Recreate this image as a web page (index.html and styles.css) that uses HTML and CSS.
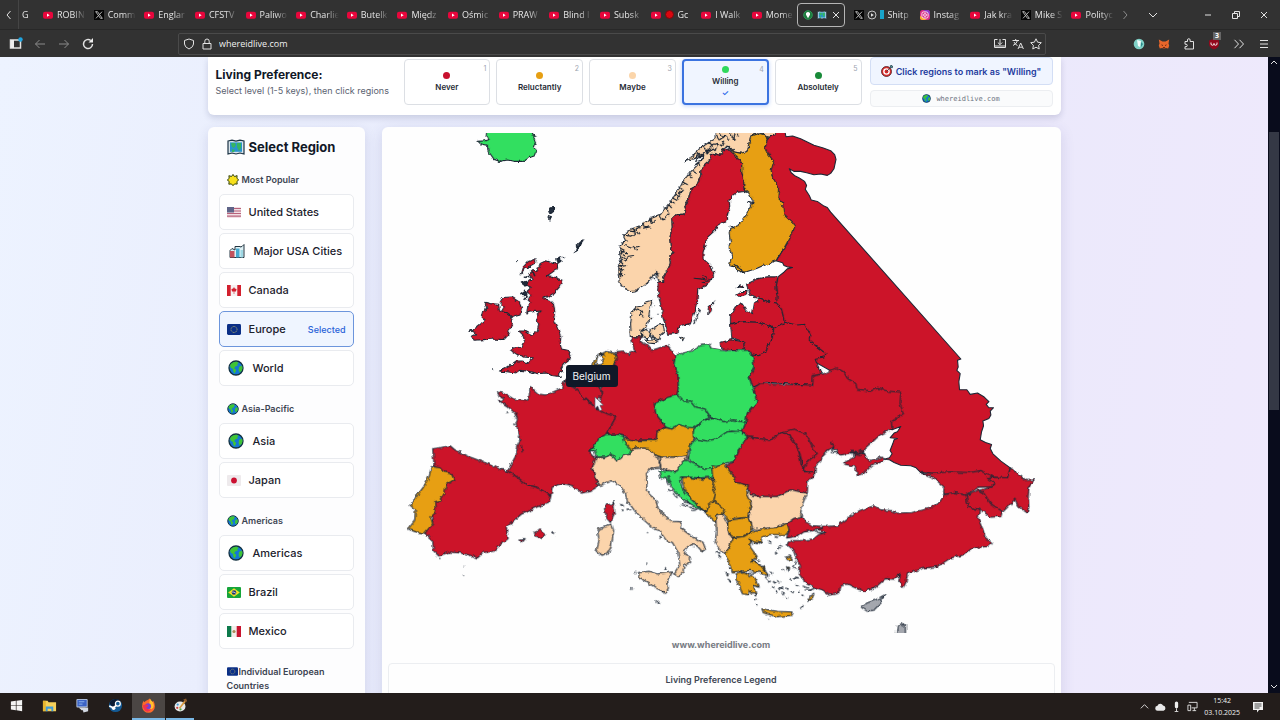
FILE: index.html
```html
<!DOCTYPE html>
<html lang="en">
<head>
<meta charset="utf-8">
<title>Where I'd Live</title>
<link rel="stylesheet" href="styles.css">
</head>
<body>
<svg class="defs" aria-hidden="true">
  <defs>
    <symbol id="yt" viewBox="0 0 12 12"><rect y="2" width="12" height="8.4" rx="2.4" fill="#e8063c"/><path d="M4.8 4.2 8 6.2 4.8 8.2z" fill="#fff"/></symbol>
    <symbol id="xlogo" viewBox="0 0 12 12"><rect width="12" height="12" fill="#050505"/><path d="M2 2h2.2l5.8 8H7.8zM9.6 2 6.7 5.3M5.3 6.8 2.4 10" fill="none" stroke="#e8e8e8" stroke-width=".9"/></symbol>
    <symbol id="globe" viewBox="0 0 16 16"><circle cx="8" cy="8" r="7" fill="#1478d4" stroke="#12303f" stroke-width="1.3"/><path d="M2 5.2C3.4 2.6 6 1.4 9 1.7L10.6 3 9.2 4.2 9.8 5.6 7.2 6.4 6.2 8.4 7.8 9.2 8 11 6.4 13.6 5.2 11 5 9 2.8 7.8zM11 7 13.6 5.4 14.6 8 13.6 11 11.6 12.4 10.6 10z" fill="#3fc435"/></symbol>
    <symbol id="eu" viewBox="0 0 14 11"><rect width="14" height="11" rx="1.4" fill="#0b2f86"/><circle cx="7" cy="5.5" r="3" fill="none" stroke="#b9b46a" stroke-width=".9" stroke-dasharray=".9 .67"/></symbol>
    <symbol id="worldmap" viewBox="0 0 18 16"><path d="M1 2 5 1.2 9 2.2 13 1.2 17 2V15l-4-1-4 1-4-1-4 1z" fill="#d8e4ea" stroke="#1c3344" stroke-width="1.2"/><path d="M3 3.4h12v9.4H3z" fill="#2993cf"/><path d="M4 4h4l1 2-2 3-2-1zM10 4h4v5l-2 3-2-4zM5 10l3 1-1 2H5z" fill="#35b562"/></symbol>
  </defs>
</svg>

<header class="browser">
  <nav class="tabs" aria-label="Open tabs">
    <button class="chev" aria-label="Scroll left"><svg viewBox="0 0 10 10"><path d="M6.5 1 3 5l3.5 4" class="ln"/></svg></button>
    <button class="tab cut"><span>G</span></button>
    <button class="tab"><svg><use href="#yt"/></svg><span>ROBIN</span></button>
    <button class="tab"><svg><use href="#xlogo"/></svg><span>Comm</span></button>
    <button class="tab"><svg><use href="#yt"/></svg><span>Englar</span></button>
    <button class="tab"><svg><use href="#yt"/></svg><span>CFSTV</span></button>
    <button class="tab"><svg><use href="#yt"/></svg><span>Paliwo</span></button>
    <button class="tab"><svg><use href="#yt"/></svg><span>Charlie</span></button>
    <button class="tab"><svg><use href="#yt"/></svg><span>Butelk</span></button>
    <button class="tab"><svg><use href="#yt"/></svg><span>Międz</span></button>
    <button class="tab"><svg><use href="#yt"/></svg><span>Ośmic</span></button>
    <button class="tab"><svg><use href="#yt"/></svg><span>PRAW</span></button>
    <button class="tab"><svg><use href="#yt"/></svg><span>Blind I</span></button>
    <button class="tab"><svg><use href="#yt"/></svg><span>Subsk</span></button>
    <button class="tab"><svg><use href="#yt"/></svg><i class="live"></i><span>Gc</span></button>
    <button class="tab"><svg><use href="#yt"/></svg><span>I Walk</span></button>
    <button class="tab"><svg><use href="#yt"/></svg><span>Mome</span></button>
    <button class="tab current" aria-label="whereidlive.com">
      <svg viewBox="0 0 12 12"><circle cx="6" cy="6" r="5.2" fill="#1c7a3e" stroke="#30a45c"/><path d="M6 9.8 3.6 5.6a2.5 2.5 0 1 1 4.8 0z" fill="#fff"/></svg>
      <svg><use href="#worldmap"/></svg>
      <svg class="x" viewBox="0 0 10 10"><path d="m2 2 6 6M8 2 2 8" class="ln"/></svg>
    </button>
    <button class="tab wide"><svg><use href="#xlogo"/></svg><svg viewBox="0 0 12 12"><circle cx="6" cy="6" r="4.8" class="ln"/><path d="M4.800 3.800 8.200 6 4.800 8.200z" fill="#e4e4e4"/></svg><i class="bar"></i><span>Shitp</span></button>
    <button class="tab"><svg viewBox="0 0 12 12"><rect width="12" height="12" rx="3" fill="#d92c86"/><path d="M0 7v2q0 3 3 3h5z" fill="#f9a72b"/><path d="M4 0h5q3 0 3 3v3z" fill="#8a37c8"/><rect x="2.3" y="2.3" width="7.4" height="7.4" rx="2" fill="none" stroke="#fff"/><circle cx="6" cy="6" r="1.7" fill="none" stroke="#fff"/></svg><span>Instag</span></button>
    <button class="tab"><svg><use href="#yt"/></svg><span>Jak kra</span></button>
    <button class="tab"><svg><use href="#xlogo"/></svg><span>Mike S</span></button>
    <button class="tab"><svg><use href="#yt"/></svg><span>Polityc</span></button>
    <div class="wincontrols">
      <button aria-label="Scroll right"><svg class="dim" viewBox="0 0 10 10"><path d="M3.5 1 7 5 3.5 9" class="ln"/></svg></button>
      <button aria-label="List all tabs"><svg viewBox="0 0 10 10"><path d="m1 3 4 4 4-4" class="ln"/></svg></button>
      <button class="gap" aria-label="Minimize"><svg viewBox="0 0 10 10"><path d="M2 5h6" class="ln"/></svg></button>
      <button aria-label="Restore"><svg viewBox="0 0 10 10"><path d="M1.500 3.500h5v5h-5zM3.500 3.500v-2h5v5h-2" class="ln"/></svg></button>
      <button aria-label="Close"><svg viewBox="0 0 10 10"><path d="m2 2 6 6M8 2 2 8" class="ln"/></svg></button>
    </div>
  </nav>
  <div class="toolbar">
    <div class="navbtns">
      <button aria-label="Sidebar"><svg viewBox="0 0 14 14"><path d="M1.500 3h10v8h-10z" class="ln bold"/><path d="M2 3h3v8H2z" fill="#eee"/><circle cx="11.500" cy="2.500" r="2.200" fill="#1fa5e0"/></svg></button>
      <button aria-label="Back"><svg class="dim" viewBox="0 0 14 14"><path d="M12 7H2.500M6.500 3l-4 4 4 4" class="ln"/></svg></button>
      <button aria-label="Forward"><svg class="dim" viewBox="0 0 14 14"><path d="M2 7h9.500M7.500 3l4 4-4 4" class="ln"/></svg></button>
      <button aria-label="Reload"><svg viewBox="0 0 14 14"><path d="M11.500 7A4.500 4.500 0 1 1 9.800 3.500" class="ln bold"/><path d="M12 1v4.500H7.500z" fill="#eee"/></svg></button>
    </div>
    <div class="address">
      <svg viewBox="0 0 12 12"><path d="M6 1 10.500 2.500V6q0 3-4.500 5Q1.500 9 1.500 6V2.500z" class="ln"/></svg>
      <svg viewBox="0 0 12 12"><path d="M2 5.500h8V11H2zM3.800 5.500V3.200a2.200 2.200 0 0 1 4.400 0v2.300" class="ln"/></svg>
      <input type="text" aria-label="Address" value="whereidlive.com">
      <svg viewBox="0 0 12 12"><path d="M3.500 1.500h-3v8h11v-8h-3M6 1v5.500M3.800 4.500 6 6.700l2.200-2.200M1 8h10" class="ln"/></svg>
      <svg viewBox="0 0 12 12"><path d="M.5 2.500h6.500M3.700 1v1.500M5.500 2.500Q4.500 6 1 7.500M2 4q1 2.500 3.500 3.500M6 11l2.700-6 2.700 6M7 9.200h3.500" class="ln"/></svg>
      <svg viewBox="0 0 12 12"><path d="m6 .8 1.600 3.400 3.700.5-2.700 2.600.6 3.700L6 9.200 2.800 11l.6-3.700L.7 4.700l3.700-.5z" class="ln"/></svg>
    </div>
    <div class="ext">
      <button aria-label="Extension"><svg viewBox="0 0 12 12"><circle cx="6" cy="6" r="5.300" fill="#7fd0c6"/><path d="M4 2 8 3 7 9 5 8z" fill="#f2fbfa"/><path d="M8 4 10 6 8 9z" fill="#2a8b8b"/></svg></button>
      <button aria-label="Wallet"><svg viewBox="0 0 12 12"><path d="m.8 1.500 3.700 2h3l3.700-2-.7 4 .7 2-1 3-2.400-.6L6 11l-1.800-1.100-2.400.6-1-3 .7-2z" fill="#e8662a"/><path d="M3 6.500 5 7 4.500 8zM9 6.500 7 7l.5 1zM4.800 9.300h2.400L6.800 10.500H5.200z" fill="#4a1d10"/></svg></button>
      <button aria-label="Extensions"><svg viewBox="0 0 12 12"><path d="M2 3.500h2.500V2a1.300 1.300 0 0 1 2.600 0v1.500H10.500V11H2V8.700h1a1.200 1.200 0 0 0 0-2.500H2z" class="ln"/></svg></button>
      <button class="shield" aria-label="Blocker"><svg viewBox="0 0 12 12"><path d="M6 .8 11 2.500V6q0 3.500-5 5.500Q1 9.500 1 6V2.500z" fill="#93081c"/><path d="M3 4.500v2q1.500 1.500 3 0 1.500 1.500 3 0v-2M6 5v1.500" fill="none" stroke="#fff" stroke-width=".9"/></svg><b>3</b></button>
      <button aria-label="More tools"><svg viewBox="0 0 12 12"><path d="m1.500 1.800 4 4.200-4 4.200M6.500 1.800l4 4.200-4 4.200" class="ln"/></svg></button>
      <button aria-label="Menu"><svg viewBox="0 0 12 12"><path d="M2 2.500h8M2 6h8M2 9.500h8" class="ln"/></svg></button>
    </div>
  </div>
</header>

<div class="viewport">
<div class="page">
  <section class="prefs">
    <div class="intro">
      <h2>Living Preference:</h2>
      <p>Select level (1-5 keys), then click regions</p>
    </div>
    <div class="levels">
      <button class="level never"><kbd>1</kbd><i></i><span>Never</span></button>
      <button class="level reluctant"><kbd>2</kbd><i></i><span>Reluctantly</span></button>
      <button class="level maybe"><kbd>3</kbd><i></i><span>Maybe</span></button>
      <button class="level willing active" aria-pressed="true"><kbd>4</kbd><i></i><span>Willing</span><em>✓</em></button>
      <button class="level absolute"><kbd>5</kbd><i></i><span>Absolutely</span></button>
    </div>
    <div class="hints">
      <p class="hint"><svg viewBox="0 0 12 12"><circle cx="5.500" cy="6.500" r="5" fill="#d92b2b" stroke="#4a1e22" stroke-width=".8"/><circle cx="5.500" cy="6.500" r="3.300" fill="#fff"/><circle cx="5.500" cy="6.500" r="1.900" fill="#d92b2b"/><path d="m5.500 6.500 4-4L9.300.8 10.500 0l.3 1.200L12 1.500l-.8 1.300-1.700-.3" fill="#5aa" stroke="#233b4a" stroke-width=".8"/></svg>Click regions to mark as "Willing"</p>
      <p class="site"><svg><use href="#globe"/></svg>whereidlive.com</p>
    </div>
  </section>

  <div class="columns">
    <aside class="sidebar">
      <h1><svg><use href="#worldmap"/></svg>Select Region</h1>
      <h3><svg viewBox="0 0 12 12"><path d="m6 .4 1.500 2.200 2.600-1-.2 2.700 1.800 1.600-1.800 1.600.3 2.600-2.600-.2L6 11.700 4.400 9.900l-2.600.3.4-2.700L.3 6l1.900-1.600L1.900 1.700l2.600.8z" fill="#f7e01c" stroke="#33430f" stroke-width="1"/></svg>Most Popular</h3>
      <ul>
        <li><button><svg class="flag" viewBox="0 0 14 11"><rect width="14" height="11" rx="1" fill="#f1dfe4"/><path d="M0 1.500h14M0 4h14M0 6.500h14M0 9.200h14" stroke="#b8637b" stroke-width="1.200"/><rect width="7" height="5.500" fill="#5f6488"/></svg>United States</button></li>
        <li><button><svg class="city" viewBox="0 0 16 14"><path d="M1 13.500V6.500L3 4.500 6 6V2.500h5V3l2-.5 2-2v13z" fill="#dff1f5" stroke="#223540"/><path d="M1 7h4.500v6.500H1z" fill="#c2525c"/><path d="M7 4.500h3.500v9H7z" fill="#46a9cf"/><path d="M11.500 6H14v7.500h-2.500z" fill="#9ed8e4"/></svg>Major USA Cities</button></li>
        <li><button><svg class="flag" viewBox="0 0 14 11"><rect width="14" height="11" rx="1" fill="#f6f2f2"/><path d="M0 0h3.700v11H0zM10.300 0H14v11h-3.700z" fill="#d3202e"/><path d="m7 2 .8 1.500 1.800.5-.6 2.400H7.300V9h-.6V6.400H5L4.400 4l1.800-.5z" fill="#d3202e"/></svg>Canada</button></li>
        <li><button class="selected" aria-current="true"><svg class="flag"><use href="#eu"/></svg>Europe<small>Selected</small></button></li>
        <li><button><svg class="round"><use href="#globe"/></svg>World</button></li>
      </ul>
      <h3><svg><use href="#globe"/></svg>Asia-Pacific</h3>
      <ul>
        <li><button><svg class="round"><use href="#globe"/></svg>Asia</button></li>
        <li><button><svg class="flag" viewBox="0 0 14 11"><rect width="14" height="11" rx="1" fill="#eeeaec"/><circle cx="7" cy="5.500" r="2.900" fill="#cb1030"/></svg>Japan</button></li>
      </ul>
      <h3><svg><use href="#globe"/></svg>Americas</h3>
      <ul>
        <li><button><svg class="round"><use href="#globe"/></svg>Americas</button></li>
        <li><button><svg class="flag" viewBox="0 0 14 11"><rect width="14" height="11" rx="1" fill="#16a53a"/><path d="m7 1.200 5.800 4.300L7 9.800 1.200 5.500z" fill="#f2e02c"/><circle cx="7" cy="5.500" r="2.300" fill="#20366f"/><path d="M5 5q2-.4 3.900 1.300" stroke="#fff" fill="none" stroke-width=".7"/></svg>Brazil</button></li>
        <li><button><svg class="flag" viewBox="0 0 14 11"><rect width="14" height="11" rx="1" fill="#f2eeea"/><path d="M0 0h4.300v11H0z" fill="#0d7a4b"/><path d="M9.700 0H14v11H9.700z" fill="#c8142f"/><circle cx="7" cy="5.500" r="1.600" fill="#a98b58"/></svg>Mexico</button></li>
      </ul>
      <h3><svg class="tight"><use href="#eu"/></svg>Individual European Countries</h3>
    </aside>

    <main class="mapcard">
      <div class="map">
      <svg class="europe" viewBox="1164 399 1998 1500" role="img" aria-label="Map of Europe">
        <defs>
          <filter id="coast" filterUnits="userSpaceOnUse" x="1164" y="399" width="1998" height="1500" color-interpolation-filters="sRGB">
            <feTurbulence type="fractalNoise" baseFrequency="0.07" numOctaves="2" seed="4" result="n"/>
            <feDisplacementMap in="SourceGraphic" in2="n" scale="13" xChannelSelector="R" yChannelSelector="G"/>
          </filter>
        </defs>
        <g class="land">
          <path class="r" transform="translate(1800 360)" d="M500 60 510 46 516 30 552 30 556 50 576 48 600 56 620 66 640 76 668 84 690 92 702 104 706 118 700 146 690 160 680 166 660 162 640 164 618 158 600 154 580 154 566 146 572 158 584 168 596 174 612 184 618 196 614 208 626 226 632 240 650 244 670 258 680 262 690 276 1080 716 1070 720 1072 740 1068 750 1078 760 1074 784 1076 808 1098 808 1108 822 1130 818 1150 830 1164 844 1156 852 1164 862 1178 862 1168 872 1170 884 1164 894 1146 902 1148 916 1142 934 1138 958 1154 966 1172 972 1168 984 1176 1000 1200 1022 1228 1042 1220 1076 1180 1074 1140 1060 1106 1060 1050 1060 1000 1060 960 1056 946 1042 930 1036 900 1034 880 1026 866 1018 850 1016 866 1012 874 1000 868 990 876 970 880 958 890 954 868 952 880 938 890 934 900 918 874 928 800 900 740 780 600 700 530 600 520 540 532 470 550 456 560 446 576 442 560 440 550 436 546 428 526 422 560 370 560 320 530 260 510 200 500 140 480 90Z"/>
        </g>
        <g class="land" filter="url(#coast)">
          <g transform="translate(1170 360)">
            <path class="g" d="M290 30 288 50 300 58 286 62 264 64 272 72 292 76 294 92 312 118 330 124 352 120 372 124 400 124 418 112 432 108 438 92 430 80 436 66 430 50 438 48 424 44 424 30Z"/>
            <path class="r" d="M466 422 482 428 504 432 500 446 484 458 472 466 490 470 516 480 508 500 492 518 472 530 458 534 478 540 490 552 494 572 490 600 504 628 512 650 510 672 514 686 532 690 540 704 534 722 520 732 512 744 518 752 502 760 510 768 486 766 468 758 442 760 430 756 410 752 388 750 376 758 350 754 328 752 350 742 378 722 396 722 416 728 426 712 400 710 380 702 362 690 374 682 396 680 404 664 398 644 386 632 404 632 426 644 440 636 446 612 438 598 440 582 450 572 428 574 410 578 412 560 422 546 414 540 422 524 410 514 424 500 408 496 416 480 430 476 416 460 428 448 440 454 450 430ZM438 416 436 428 418 438 404 444 390 464 396 444 414 424Z"/>
            <path class="r" d="M284 546 300 550 326 552 328 572 334 574 352 578 366 592 362 620 352 644 338 658 310 656 280 658 252 660 244 648 258 640 242 632 258 622 286 600 274 588 278 572 290 564Z"/>
            <path class="r" d="M334 574 342 560 330 546 338 532 364 530 386 544 394 562 390 584 368 590 352 578Z"/>
            <path class="d" d="M478 264l16-1-4 10-10 8-4-8zM474 290l6 2-2 6zM578 360l-12 18-10 18 4-20zM500 416l10-6 2 12-8 6zM516 408l8 5M394 488l12-4 6 6-10 4zM392 520l14-10 4 12-10 4zM400 538l12-6-4-8M404 472l14-4M420 450l10 8 4 10M378 422h3M306 749h3"/>
            <path class="p" d="M720 650 718 610 722 580 736 560 760 556 770 544 786 540 780 556 776 582 784 594 770 606 766 620 752 632 752 650ZM752 634l18-8 10 14-6 16-16-4ZM784 626l20-12 14-2 4 22-12 10-4 14-18-4-8-16ZM764 660l20-2 18 4-8 8-20-2ZM868 648l10 4-4 9Z"/>
            <path class="s" d="M726 572l16-6 16 8-8 8 10 6M790 556h2M800 582h2"/>
          </g>
          <g transform="translate(1800 360)">
            <path class="p" d="M56 480 66 500 88 514 104 512 130 498 150 480 162 456 172 462 174 480 186 486 190 468 202 448 210 432 208 408 218 396 210 376 208 352 216 320 214 296 226 284 250 282 258 272 250 260 262 244 272 206 288 198 300 170 302 146 326 124 334 100 362 106 366 92 382 76 402 96 422 100 442 92 446 68 452 44 480 38 496 46 500 60 506 48 524 44 530 26 344 26 344 56 318 74 296 84 280 106 250 126 290 112 310 106 296 130 270 156 250 180 238 204 216 236 196 262 180 284 150 296 120 316 84 330 70 350 76 362 60 376 58 400 64 420 52 440 54 460Z"/>
            <path class="f" d="M72 376 94 384 118 378M98 378 110 390M76 424 84 408 100 406M66 344 92 348 104 338M84 332 110 336 116 344M58 392 80 398M54 440 80 436M56 460 76 464M64 410 78 420M126 308 132 324 150 320M148 292 154 310 166 300M174 284 186 302 200 286 208 276M190 262 204 274M204 242 222 252M216 234 232 242 238 228M234 200 250 208 240 222M244 184 262 194M262 160 276 174M272 148 292 160M290 90 300 110 316 96 330 88M306 78 318 92 336 74 350 70M322 66 340 78M346 44 356 60 374 48 386 62M360 38 370 54M390 40 400 58 404 42M410 38 414 50M276 104 296 100 288 120M284 124 306 118M56 420 70 430 62 444M62 366 82 362M156 470 164 480M166 452 168 474M66 450 60 474M60 384l12 6-10 10 14 8M52 448l14 4-8 14M96 324l8 10 12-14M196 268l10-14 8 10M226 220l8 10 6-18M282 136l10-8 6 10M314 86l6 16 14-18 10 8 8-22 12 8 6-16"/>
            <path class="r" d="M380 84 398 100 412 112 424 130 424 156 430 180 430 206 434 214 410 216 396 226 386 240 388 260 380 288 382 300 352 318 338 336 318 354 314 376 308 396 308 416 324 430 336 444 340 462 330 484 316 496 292 508 290 540 284 574 270 610 246 614 232 622 230 640 202 642 198 620 188 594 184 564 178 540 172 510 174 486 190 484 190 468 202 448 210 432 208 408 218 396 210 376 208 352 216 320 214 296 226 284 250 282 258 272 250 260 262 244 272 206 288 198 300 170 302 146 326 124 334 100 362 106 366 92ZM346 540 334 556 332 572 322 584 324 562Z"/>
            <path class="f" d="M280 474 300 476 318 480 336 478M304 486 322 488M306 466 320 474M298 566 290 588 280 612"/>
            <path class="o" d="M380 74 402 96 422 100 442 92 446 68 452 44 470 38 496 46 500 60 494 84 504 104 520 124 512 150 514 166 534 204 532 236 546 250 550 284 576 308 582 322 570 348 546 392 526 422 496 432 470 444 440 454 420 458 408 446 388 432 394 410 386 380 390 366 386 340 388 324 412 318 430 292 450 262 458 246 446 220 430 206 430 180 424 156 424 130 412 112 396 96Z"/>
            <path class="f" d="M386 436 400 440 414 456M400 432 416 444 434 460M440 246 456 250M388 318 404 324"/>
            <path class="r" d="M362 666 392 658 430 664 432 690 364 686Z"/>
            <path class="r" d="M438 492 470 476 500 470 532 470 526 500 530 532 528 548 506 546 480 534 458 532 446 516ZM406 524l16-10 18 0-4 12-20 6ZM410 500l14-4 4 6Z"/>
            <path class="r" d="M390 610 390 584 404 560 424 550 440 572 456 580 462 548 480 534 506 546 528 548 542 566 552 604 538 622 520 624 470 606 420 604Z"/>
            <path class="r" d="M390 612 420 604 470 606 520 624 516 650 502 674 496 696 474 706 456 704 446 690 432 690 430 664 394 652Z"/>
            <path class="r" d="M516 650 520 624 552 606 590 614 612 612 628 640 626 660 650 680 676 700 670 710 644 714 652 736 662 760 634 792 634 796 560 790 500 786 458 800 446 770 460 742 456 704 474 706 496 696 502 674Z"/>
          </g>
          <g transform="translate(1170 1080)">
            <path class="r" d="M722-70 752-70 750-56 772-44 784-30 810-38 832-44 846-28 854-10 850 14 862 40 864 80 860 104 828 114 792 130 796 160 812 180 826 200 800 214 798 240 770 238 742 240 712 236 700 226 680 222 648 222 660 200 676 170 640 156 622 146 630 120 634 84 640 60 652 40 674 10 676-26 700-28 714-16 722-30 736-22 728-44Z"/>
            <path class="r" d="M522 60 514 84 490 94 464 104 444 100 420 78 416 116 406 122 380 118 360 110 340 98 322 96 328 108 340 114 328 122 350 136 372 156 382 174 378 190 386 218 392 238 384 252 378 284 352 332 384 352 410 374 440 380 482 406 486 380 514 368 548 376 576 398 600 392 626 376 612 344 606 322 618 296 596 270 612 256 628 232 648 222 660 200 676 170 640 156 600 128 580 110 560 88 536 74ZM672 422 668 440 672 460 660 486 650 474 642 446 648 434 666 430Z"/>
            <path class="r" d="M522 60 540 48 570 40 600 50 630 84 634 106 618 120 622 146 600 128 580 110 560 88 548 78Z"/>
            <path class="o" d="M606 20 612 0 624-18 650-26 676-20 678-6 668 14 650 24 644 50 634 60 630 84 622 76 600 66 604 40Z"/>
            <path class="w" d="M622-12 636-20 640-6 634 2 638 12 616 14Z"/>
            <path class="r" d="M128 264 148 262 180 256 194 268 240 290 300 312 330 326 352 332 384 352 410 374 440 380 482 406 478 424 430 444 392 462 366 486 348 500 354 534 326 556 312 572 280 576 262 592 240 584 216 578 178 574 146 586 130 570 128 540 104 518 128 486 130 460 134 424 150 420 168 372 192 358 184 340 150 330 132 316 130 290ZM432 516l18-8 16 12-12 14-18-8ZM388 536l14-2-8 10ZM482 512l12 6-2 4Z"/>
            <path class="o" d="M124 318 150 322 160 334 184 340 192 358 168 372 164 396 150 420 134 424 136 456 122 470 128 490 104 518 78 514 54 506 74 480 76 448 60 434 100 380 118 346Z"/>
            <path class="p" d="M618 290 648 290 662 280 678 300 692 290 700 280 716 282 722 268 742 262 776 264 790 282 808 290 806 306 812 320 788 322 768 336 770 370 768 392 796 420 806 450 840 482 874 484 868 500 900 524 938 546 944 562 936 574 920 556 900 552 884 566 882 580 900 590 900 606 882 614 878 632 864 648 850 640 868 612 862 574 846 546 828 540 806 510 790 504 760 478 736 454 712 424 704 396 688 374 664 360 626 376 612 344 606 322ZM744 636 776 632 800 640 846 634 832 660 834 686 826 698 800 684 770 664 748 652ZM626 504 648 498 664 490 670 510 664 552 656 574 636 584 618 572 626 540 622 510Z"/>
            <path class="g" d="M648 222 684 222 700 228 706 250 724 266 716 282 700 280 692 290 678 300 662 280 648 290 618 290 612 270 596 272 612 256 626 234Z"/>
            <path class="o" d="M700 236 712 236 742 240 798 240 800 214 826 202 844 206 866 192 908 202 910 232 898 258 890 284 850 290 820 292 790 282 776 264 742 262 722 268 706 250Z"/>
            <path class="p" d="M806 290 850 290 890 284 886 300 866 316 856 334 834 330 812 322Z"/>
            <path class="g" d="M806 332 834 330 856 334 866 316 886 298 910 310 940 326 968 320 966 350 930 352 870 350 874 380 896 410 944 456 930 448 890 424 860 402 838 370 826 350 812 356Z"/>
            <path class="f" d="M826 356 834 374M832 346 842 368M834 386 850 394M848 400 862 412M872 432 892 436M880 424 900 430M896 440 922 444M904 450 920 448M384 226 390 246M382 160 372 172M394 254 396 276"/>
            <path class="d" d="M350 156h5M370 190l4 4M690 432l10 4M694 448l6 2M712 446h8M770 516h3M822 620l6 6M768 608h3M722 684l5 2M796 720l12 10M148 594h3M222 618h3M219 643h3M732 636h3M808 526l6 8"/>
          </g>
          <g transform="translate(2040 1080)">
            <path class="g" d="M-14-16 32-28 60-44 86-48 92-36 122-30 206-30 218-8 220 22 206 50 218 90 230 124 200 160 196 186 160 178 130 184 92 172 74 146 46 140 32 122 8 122-10 104-6 80-8 40-20 14Z"/>
            <path class="g" d="M-78 130-42 112-10 104 8 122 32 122 46 140 74 146 90 172 70 180 40 202 18 200-4 192-26 206-44 200-58 180-74 160Z"/>
            <path class="g" d="M40 206 70 180 100 174 130 184 160 178 196 186 184 218 150 212 136 218 110 236 80 242 44 236 38 222Z"/>
            <path class="r" d="M218 84 240 68 300 72 396 74 398 46 430 40 468 22 490 36 500 54 526 70 528 86 570 92 590 84 620 92 660 96 658 130 668 160 632 184 634 206 600 222 580 240 550 266 548 278 520 276 480 284 456 262 444 268 430 280 420 300 406 312 402 340 372 332 360 320 306 214 270 240 236 234 200 230 186 214 196 186 200 160 230 124Z"/>
            <path class="r" d="M486 310 520 290 518 278 550 280 560 296 570 300 600 290 612 296 604 304 574 314 548 340 530 346 524 318Z"/>
            <path class="f" d="M452 240 460 262 452 276 476 278M512 272 530 278 544 270 552 286M520 282 540 286"/>
            <path class="g" d="M26 260 44 236 80 242 110 234 140 214 180 212 200 228 196 242 178 262 160 302 132 310 110 318 94 324 70 326 40 308 20 292 28 278Z"/>
            <path class="r" d="M200 230 236 234 270 240 306 214 330 230 352 262 362 310 370 334 404 334 398 348 382 358 380 398 330 388 290 408 240 408 206 402 200 374 166 366 158 346 136 316 160 302 178 262Z"/>
            <path class="r" d="M306 214 340 206 376 220 394 256 410 282 382 300 368 326 360 290 352 262 330 230Z"/>
            <path class="o" d="M4 350 20 350 60 356 94 352 102 364 98 384 106 398 100 420 84 434 76 456 50 432 26 410 10 380Z"/>
            <path class="o" d="M94 316 110 318 130 310 146 330 158 346 166 366 204 374 196 392 212 430 200 470 160 474 142 480 132 462 108 434 100 420 106 398 98 384 102 364 96 346Z"/>
            <path class="o" d="M100 420 132 446 126 462 108 466 106 484 78 460 84 434Z"/>
            <path class="p" d="M106 466 126 462 140 490 146 524 156 532 148 556 132 580 120 570 104 550 108 510Z"/>
            <path class="o" d="M142 480 204 470 216 500 212 512 190 528 152 530 142 504Z"/>
            <path class="p" d="M206 392 206 402 240 408 290 408 330 388 380 398 366 430 360 460 368 468 340 474 320 488 290 498 240 506 216 506 212 484 204 470 212 430 196 398Z"/>
            <path class="o" d="M156 532 190 528 216 512 240 506 290 500 320 488 330 496 318 522 270 522 240 530 246 548 220 544 206 536 210 560 230 588 214 600 250 620 260 644 240 636 210 630 176 632 156 634 144 604 132 580 148 556ZM166 640 190 636 222 650 236 680 220 674 226 706 206 688 206 702 186 700 178 676 166 656ZM244 744 290 752 338 754 334 764 290 768 248 756ZM314 590l14-4 8 10-14 2ZM400 698l-4 16-12 8 4-16ZM134 638l10 2-2 6ZM146 656l6 4-4 3ZM318 618l6 2-2 12Z"/>
            <path class="f" d="M214 602 240 614 262 642 258 656M206 540 220 552M222 546 240 552M176 632 200 640 222 636M222 596 238 600M384 690 404 682M366 676 386 682M372 688 396 690M404 514 432 518M346 602 336 620 352 626"/>
            <path class="d" d="M262 540l10 6M286 530h6M296 552l10 4M284 574l6 6M300 560l-8 6M262 658l8 6M278 662l6 6M272 678l10 6M284 690l8 4M296 680l12 6M304 696l6 8M290 660l8 4M318 682l6 4M326 654l8 4M340 650l12 2M344 672l10 2M332 692l8 4M352 690l4 4M368 734l-8 10M364 702l4 6M270 634l4 6M306 626l4 4M222 716h6M226 730l4 4M318 710l4 2M262 774h3M144 620l4 6M106 574l10 4M114 584l10 6"/>
            <path class="r" d="M720 336 760 338 810 334 866 336 900 330 940 350 920 352 942 370 930 380 894 380 856 404 820 396 788 402 790 380 760 352Z"/>
            <path class="r" d="M940 350 980 352 988 322 1036 360 1060 358 1044 380 1042 410 1044 440 1038 456 1014 440 1002 416 980 440 962 458 920 420 906 402 892 390 930 380 942 370 920 352Z"/>
            <path class="r" d="M856 404 892 388 910 400 930 430 964 452 960 468 930 470 896 446 862 440 858 420Z"/>
            <path class="r" d="M320 488 340 474 368 468 374 484 400 496 436 498 410 508 370 514 350 528 318 532 326 510Z"/>
            <path class="r" d="M788 404 820 396 856 404 862 440 896 448 892 476 908 510 912 530 934 546 920 558 894 560 870 566 850 582 810 592 770 618 730 622 690 636 680 640 676 664 668 680 654 660 660 640 640 656 614 654 580 684 550 692 520 680 500 670 478 676 474 698 446 704 426 688 400 680 372 664 356 640 360 616 346 590 340 570 320 552 330 540 370 540 400 534 414 522 436 516 414 506 430 498 470 496 500 474 530 452 580 436 600 448 630 450 650 458 690 456 750 442 780 420Z"/>
            <path class="n" d="M616 700 600 716 604 724 580 748 560 752 542 740 560 726 584 718ZM650 796 664 788 668 796 674 790 674 830 646 830Z"/>
          </g>
        </g>
        <path class="cursor" d="M1784 1190v34l8-7 6 14 7-3-6-13 10-1z"/>
      </svg>
      <div class="tooltip" role="tooltip">Belgium</div>
      </div>
      <p class="credit">www.whereidlive.com</p>
      <section class="legend"><h4>Living Preference Legend</h4></section>
    </main>
  </div>
</div>
<div class="scroll" aria-hidden="true"><svg viewBox="0 0 12 12"><path d="m3 7 3-3 3 3" class="ln"/></svg><i></i><svg viewBox="0 0 12 12"><path d="m3 4 3 3 3-3" class="ln"/></svg></div>
</div>

<footer class="taskbar">
  <button aria-label="Start"><svg viewBox="0 0 16 16"><path d="M2 3.800 7.300 3v4.600H2zM8 2.900l6-.9v5.600H8zM2 8.300h5.300V13L2 12.200zM8 8.300h6V14l-6-.9z" fill="#f4f4f4"/></svg></button>
  <button aria-label="Files"><svg viewBox="0 0 16 16"><path d="M1 3h5l1 1.500h8V14H1z" fill="#f5d05a"/><path d="M1 3h3v11H1z" fill="#e6b52e"/><path d="M4 9h8v5h-2v-2.500H6V14H4z" fill="#3f9bd8"/></svg></button>
  <button aria-label="Computer"><svg viewBox="0 0 16 16"><rect x="1.500" y="1" width="12" height="9" rx="1" fill="#b9c7de"/><rect x="2.500" y="2" width="10" height="7" fill="#3a62c5"/><path d="M4 10h7l2 3H7zM8 11l6-1v4l-5 1.500z" fill="#d3d9e3"/><path d="M4 4h6M4 6.500h4" stroke="#8fb6f0"/></svg></button>
  <button aria-label="Steam"><svg viewBox="0 0 16 16"><circle cx="8" cy="8" r="7" fill="#145a94"/><path d="M1.500 5.500A7 7 0 0 1 14 4.500L9 9 5 10z" fill="#0b1c34"/><circle cx="10.500" cy="6" r="2.600" fill="#145a94" stroke="#fff" stroke-width="1.300"/><path d="m1.300 8.500 4.500 2L8.600 8" fill="none" stroke="#fff" stroke-width="1.800"/><circle cx="6" cy="11" r="1.900" fill="#fff"/></svg></button>
  <button class="on" aria-label="Firefox"><svg viewBox="0 0 16 16"><path d="M8 1.500 9.500.5Q10 2.500 12.500 4.200L13 3q2 2.500 1.800 6A6.800 6.800 0 0 1 1.200 9Q1 5 3 3l.5 1.500Q5 2.600 8 1.500z" fill="#ff6a2a"/><path d="M9.500.5Q10 2.500 12.500 4.200 14.500 7 13 10.500 11 13 8 12z" fill="#ffc12e"/><circle cx="7.500" cy="8.800" r="3.200" fill="#7a3fd0"/><path d="M2 8q3-2 5-.5 1.500.5.5 1.500Q5 9 6 11q2 2 5 .5-1.500 3.500-5 3Q2.500 13 2 8z" fill="#f2324f"/></svg></button>
  <button class="open" aria-label="Paint"><svg viewBox="0 0 16 16"><ellipse cx="7.500" cy="9" rx="5.800" ry="5.300" fill="#e5e8e9"/><circle cx="5" cy="7" r="1.200" fill="#3f9bd8"/><circle cx="4.500" cy="10.500" r="1.200" fill="#cf4141"/><circle cx="8" cy="12" r="1.200" fill="#50a84c"/><path d="m6 11 7-9.500L14.500 3 8 11z" fill="#d99a3f"/><path d="M11 1.500 14 .5l1 3-2 1z" fill="#8b5a2b"/></svg></button>
  <div class="tray">
    <svg viewBox="0 0 12 12"><path d="m2 8 4-4 4 4" class="ln"/></svg>
    <svg viewBox="0 0 12 12"><path d="M3 10.500a2.600 2.600 0 0 1-.3-5.200A3.300 3.300 0 0 1 8.800 5 2.800 2.800 0 0 1 9.300 10.500z" fill="#e9e9e9"/></svg>
    <svg viewBox="0 0 12 12"><rect x="4.200" y="0.500" width="3.600" height="7.500" rx="1.800" fill="#eee"/><path d="M6 8v3.500M4 11.500h4" class="ln"/></svg>
    <svg viewBox="0 0 12 12"><path d="M2 1.500h9v6H5M1 4.500h3v6H1zM6 10.500h4M8 7.500v3" class="ln"/></svg>
    <time>15:42<br>03.10.2025</time>
    <svg class="note" viewBox="0 0 12 12"><path d="M1 1h10v8H7l-2 2.500V9H1z" fill="#f2f2f2"/><path d="M2.500 3h7M2.500 5h7M2.500 7h5" stroke="#222" stroke-width=".8"/></svg>
  </div>
</footer>
</body>
</html>
```

FILE: styles.css
```css
* { box-sizing: border-box; }
body { margin: 0; height: 100vh; display: flex; flex-direction: column; overflow: hidden; font-family: Inter, "Liberation Sans", sans-serif; color: #111827; }
h1, h2, h3, h4, p, ul { margin: 0; padding: 0; }
ul { list-style: none; }
button { font: inherit; color: inherit; border: 0; background: none; padding: 0; }
svg { display: block; flex: none; }
.defs { position: absolute; width: 0; height: 0; }
.ln { fill: none; stroke: #e2e2e2; stroke-width: 1; }
.bold { stroke-width: 1.5; }
.dim { opacity: .5; }

/* browser chrome */
.browser { flex: none; background: #323232; color: #e6e6e6; font-family: "Open Sans", "Noto Sans", sans-serif; font-size: 9px; }
.tabs { height: 29px; display: flex; align-items: center; }
.chev { width: 19px; height: 29px; display: flex; align-items: center; justify-content: center; border-right: 1px solid #454545; }
.chev svg, .wincontrols svg { width: 10px; height: 10px; }
.tab { flex: 50 1 0; min-width: 0; height: 24px; padding: 0 0 0 5px; display: flex; align-items: center; gap: 4px; }
.tab svg { width: 10px; height: 10px; }
.tab span { flex: 1; min-width: 0; white-space: nowrap; text-align: left; line-height: 14px; -webkit-mask-image: linear-gradient(90deg, #000 50%, transparent 90%); mask-image: linear-gradient(90deg, #000 50%, transparent 90%); }
.tab.cut { flex: 0 0 19px; padding: 0 0 0 3px; }
.tab.current { flex: 0 0 48px; margin-right: 4px; border: 1px solid #b5b5b5; border-radius: 4px; background: #2f2f2f; }
.tab.wide { flex: 66 1 0; gap: 3px; }
.live { flex: none; width: 9px; height: 9px; border-radius: 50%; background: #d9060f; border: 1px solid #6e0b10; }
.bar { flex: none; width: 4px; height: 9px; background: #19a3c9; }
.wincontrols { flex: none; display: flex; align-items: center; width: 163px; justify-content: space-between; padding: 0 11px 0 3px; }
.wincontrols .gap { margin-left: 26px; }
.toolbar { height: 28px; border-top: 1px solid #282828; display: flex; align-items: center; padding: 0 10px 0 9px; }
.navbtns { flex: 0 0 169px; display: flex; gap: 10px; }
.navbtns svg { width: 14px; height: 14px; }
.address { flex: 1; height: 22px; padding: 0 3px 0 4px; border: 1px solid #4a4a4a; border-radius: 2px; display: flex; align-items: center; gap: 6px; max-width: 868px; }
.address svg { width: 12px; height: 12px; }
.address input { flex: 1; min-width: 0; border: 0; padding: 0; background: none; color: #f0f0f0; font: inherit; font-size: 9px; }
.ext { flex: none; margin-left: auto; display: flex; gap: 13px; }
.ext svg { width: 12px; height: 12px; }
.shield { position: relative; }
.shield b { position: absolute; left: 5px; top: -6px; width: 8px; height: 8px; background: #666; color: #fff; font-size: 7px; line-height: 8px; text-align: center; }

/* page */
.viewport { flex: 1; min-height: 0; display: flex; overflow: hidden; background: linear-gradient(100deg, #edf3ff 0%, #e7e9fb 45%, #efe9fc 100%); }
.page { flex: 1; min-width: 0; }
.prefs, .columns { max-width: 853px; margin: 0 auto; }
.prefs { background: #fff; border-radius: 0 0 6px 6px; padding: 0 8px 8px; display: flex; align-items: center; gap: 8px; box-shadow: 0 3px 6px rgba(30, 35, 90, .16); }
.intro { flex: none; width: 180px; white-space: nowrap; }
.intro h2 { font-size: 12px; line-height: 18px; font-weight: 700; }
.intro p { font-size: 9px; line-height: 14px; color: #5b6270; }
.levels { flex: 1; display: grid; grid-template-columns: repeat(5, 1fr); gap: 6px; }
.level { position: relative; height: 46px; border: 1px solid #dcdfe4; border-radius: 4px; background: #fff; display: flex; flex-direction: column; align-items: center; justify-content: center; font-size: 8px; line-height: 12px; font-weight: 600; color: #272c36; }
.level i { width: 7px; height: 7px; border-radius: 50%; margin-bottom: 2px; }
.level kbd { position: absolute; top: 3px; right: 3px; font: 400 7px/12px Inter, sans-serif; color: #9ca3af; }
.level em { font-style: normal; color: #2563eb; line-height: 12px; }
.never i { background: #c8102e; }
.reluctant i { background: #e69f13; }
.maybe i { background: #fbd5aa; }
.willing i { background: #2fd85c; }
.absolute i { background: #188a38; }
.level.active { border: 2px solid #3b73e0; background: #f0f5ff; box-shadow: 0 1px 4px rgba(37, 99, 235, .3); }
.hints { flex: none; width: 183px; display: flex; flex-direction: column; gap: 5px; }
.hints p { display: flex; align-items: center; justify-content: center; border-radius: 4px; white-space: nowrap; }
.hint { height: 28px; gap: 3px; background: #f0f5ff; border: 1px solid #d3def5; color: #243c9e; font-size: 9px; font-weight: 600; }
.hint svg { width: 12px; height: 12px; }
.site { height: 17px; gap: 5px; border: 1px solid #eceef1; background: #fafbfc; font-family: "DejaVu Sans Mono", monospace; font-size: 7px; color: #6b7280; }
.site svg { width: 9px; height: 9px; }

.columns { margin-top: 12px; display: flex; gap: 17px; }
.sidebar { flex: none; width: 157px; background: #fdfdfe; border-radius: 6px; padding: 10px 11px 60px; box-shadow: 0 4px 12px rgba(60, 60, 130, .15); }
.sidebar h1 { display: flex; align-items: center; gap: 4px; padding-left: 8px; font-size: 13px; line-height: 20px; font-weight: 700; white-space: nowrap; margin-bottom: 16px; }
.sidebar h1 svg { width: 18px; height: 16px; }
.sidebar h3 { padding-left: 8px; margin: 16px 0 7px; font-size: 9px; line-height: 14px; font-weight: 600; color: #3d4553; }
.sidebar h3 svg { display: inline-block; width: 12px; height: 12px; margin-right: 3px; vertical-align: -3px; }
.sidebar h3 svg.tight { width: 11px; height: 9px; margin-right: 1px; vertical-align: -1px; }
.sidebar ul { display: flex; flex-direction: column; gap: 3px; }
.sidebar li button { width: 100%; height: 36px; padding: 0 7px; display: flex; align-items: center; border: 1px solid #e9ebef; border-radius: 5px; background: #fff; font-size: 11px; font-weight: 500; color: #1b212c; white-space: nowrap; }
.flag { width: 14px; height: 11px; margin-right: 8px; }
.round { width: 16px; height: 16px; margin: 0 9px 0 1px; }
.city { width: 16px; height: 14px; margin: 0 9px 0 2px; }
.sidebar li .selected { background: #eff5ff; border-color: #6c95dc; }
.selected small { margin-left: auto; font-size: 9px; color: #2a62d8; }

.mapcard { flex: 1; min-width: 0; background: #fefefe; border-radius: 6px; padding: 6px 6px 60px; box-shadow: 0 4px 14px rgba(60, 60, 130, .15); }
.map { position: relative; }
.europe { width: 100%; height: auto; }
.land { stroke: #1c2735; stroke-width: 3.2; stroke-linejoin: round; }
.r { fill: #cc1429; }
.g { fill: #32df60; }
.o { fill: #e79f13; }
.p { fill: #fbd4ab; }
.n { fill: #a4a7ae; }
.w { fill: #fff; }
.f, .s { fill: none; stroke-width: 3.4; }
.d { fill: #253040; stroke-width: 4.5; }
.cursor { fill: #f3f3f6; stroke: #55596a; stroke-width: 2; }
.tooltip { position: absolute; left: 178px; top: 232px; height: 22px; padding: 0 7px; border-radius: 3px; background: #101828; color: #f4f5f7; font-size: 10px; line-height: 22px; }
.credit { text-align: center; font-size: 9px; line-height: 14px; margin-top: 4px; font-weight: 700; color: #777b83; }
.legend { margin-top: 11px; border: 1px solid #eceef1; border-radius: 4px; height: 80px; padding-top: 9px; }
.legend h4 { text-align: center; font-size: 9px; line-height: 14px; font-weight: 600; color: #3f4653; }

.scroll { flex: none; width: 12px; background: #090c1c; display: flex; flex-direction: column; justify-content: space-between; }
.scroll i { height: 278px; margin: 0 1px 208px; background: #343845; }
.scroll svg { width: 12px; height: 12px; }

/* desktop taskbar */
.taskbar { flex: none; height: 27px; background: #231d1b; display: flex; align-items: stretch; color: #f0f0f0; font-family: "Open Sans", "Noto Sans", sans-serif; }
.taskbar button { width: 33px; display: flex; align-items: center; justify-content: center; border-bottom: 2px solid transparent; }
.taskbar button svg { width: 15px; height: 15px; }
.taskbar .on { background: #4b4644; border-color: #7ab8e6; }
.taskbar .open { border-color: #7ab8e6; margin-left: 1px; width: 28px; }
.tray { margin-left: auto; display: flex; align-items: center; gap: 5px; padding-right: 16px; }
.tray svg { width: 11px; height: 11px; }
.tray time { font-size: 7px; line-height: 12px; text-align: center; margin: 0 7px 0 1px; }
.tray .note { width: 12px; height: 12px; }
```
